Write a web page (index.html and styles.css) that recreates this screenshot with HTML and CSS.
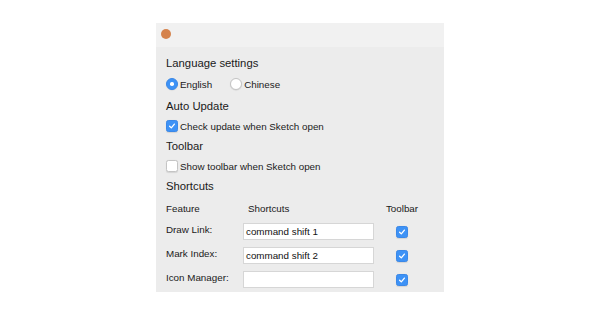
FILE: index.html
```html
<!DOCTYPE html>
<html>
<head>
<meta charset="utf-8">
<link rel="stylesheet" href="styles.css">
</head>
<body>
<div class="window">
  <div class="titlebar"><span class="dot"></span></div>
  <div class="content">
    <div class="heading">Language settings</div>
    <div class="row first">
      <span class="opt"><span class="radio on"></span>English</span>
      <span class="opt gap"><span class="radio"></span>Chinese</span>
    </div>
    <div class="heading h2">Auto Update</div>
    <div class="row">
      <span class="opt"><span class="check on"><svg viewBox="0 0 10 10"><path d="M2.6 5.2 L4.3 6.9 L7.4 3.1" /></svg></span>Check update when Sketch open</span>
    </div>
    <div class="heading">Toolbar</div>
    <div class="row">
      <span class="opt"><span class="check"></span>Show toolbar when Sketch open</span>
    </div>
    <div class="heading">Shortcuts</div>
    <div class="table">
      <div class="th">Feature</div>
      <div class="th sc">Shortcuts</div>
      <div class="th tb">Toolbar</div>

      <div class="label">Draw Link:</div>
      <div class="cell"><div class="input">command shift 1</div></div>
      <div class="cell tbc"><span class="check on"><svg viewBox="0 0 10 10"><path d="M2.6 5.2 L4.3 6.9 L7.4 3.1" /></svg></span></div>

      <div class="label">Mark Index:</div>
      <div class="cell"><div class="input">command shift 2</div></div>
      <div class="cell tbc"><span class="check on"><svg viewBox="0 0 10 10"><path d="M2.6 5.2 L4.3 6.9 L7.4 3.1" /></svg></span></div>

      <div class="label">Icon Manager:</div>
      <div class="cell"><div class="input"></div></div>
      <div class="cell tbc"><span class="check on"><svg viewBox="0 0 10 10"><path d="M2.6 5.2 L4.3 6.9 L7.4 3.1" /></svg></span></div>
    </div>
  </div>
</div>
</body>
</html>
```
FILE: styles.css
```css
html, body {
  margin: 0;
  padding: 0;
  background: #ffffff;
}
body {
  font-family: "Liberation Sans", Arial, sans-serif;
  color: #1a1a1a;
}
.window {
  margin: 23px 0 0 156px;
  width: 288px;
  height: 269px;
  background: #ececec;
  display: flex;
  flex-direction: column;
}
.titlebar {
  height: 24px;
  background: #f1f1f1;
  display: flex;
  align-items: flex-start;
  padding: 6px 0 0 5px;
  box-sizing: border-box;
}
.dot {
  width: 10px;
  height: 10px;
  border-radius: 50%;
  background: #d5834d;
}
.content {
  padding: 6px 0 0 10px;
  display: flex;
  flex-direction: column;
}
.heading {
  height: 20px;
  line-height: 20px;
  font-size: 11.3px;
}
.h2 {
  margin-top: 2px;
}
.row {
  height: 20px;
  display: flex;
  align-items: center;
  font-size: 9.8px;
}
.row.first {
  margin-top: 1px;
}
.opt {
  display: flex;
  align-items: center;
}
.opt.gap {
  margin-left: 18px;
}
.radio {
  width: 10px;
  height: 10px;
  border-radius: 50%;
  background: #ffffff;
  border: 0.5px solid #c4c4c4;
  box-shadow: 0 0.5px 1px rgba(0,0,0,0.12);
  margin-right: 2px;
  position: relative;
  box-sizing: content-box;
}
.radio.on {
  background: #3d92f6;
  border-color: #3a88e8;
}
.radio.on::after {
  content: "";
  position: absolute;
  left: 3.25px;
  top: 3.25px;
  width: 3.5px;
  height: 3.5px;
  border-radius: 50%;
  background: #ffffff;
}
.check {
  width: 10px;
  height: 10px;
  border-radius: 2.5px;
  background: #ffffff;
  border: 0.5px solid #c4c4c4;
  box-shadow: 0 0.5px 1px rgba(0,0,0,0.1);
  margin-right: 2px;
  display: flex;
  box-sizing: content-box;
}
.check.on {
  background: #3d92f6;
  border-color: #3a88e8;
}
.check svg {
  width: 10px;
  height: 10px;
}
.check path {
  fill: none;
  stroke: #ffffff;
  stroke-width: 1.3;
  stroke-linecap: round;
  stroke-linejoin: round;
}
.table {
  margin-top: 2px;
  display: grid;
  grid-template-columns: 77px 131px 56px;
  grid-template-rows: 21px 24px 24px 24px;
  font-size: 9.8px;
}
.th {
  display: flex;
  align-items: center;
}
.th.sc {
  padding-left: 5px;
}
.th.tb {
  justify-content: center;
}
.label {
  display: flex;
  align-items: center;
  padding-bottom: 4px;
  box-sizing: border-box;
}
.cell {
  display: flex;
  align-items: center;
}
.tbc {
  justify-content: center;
  padding-top: 2px;
  box-sizing: border-box;
}
.tbc .check {
  margin-right: 0;
}
.input {
  width: 131px;
  height: 17px;
  box-sizing: border-box;
  background: #ffffff;
  border: 1px solid #d6d6d6;
  padding-left: 2px;
  line-height: 15px;
  font-size: 9.8px;
  color: #111;
}
```
